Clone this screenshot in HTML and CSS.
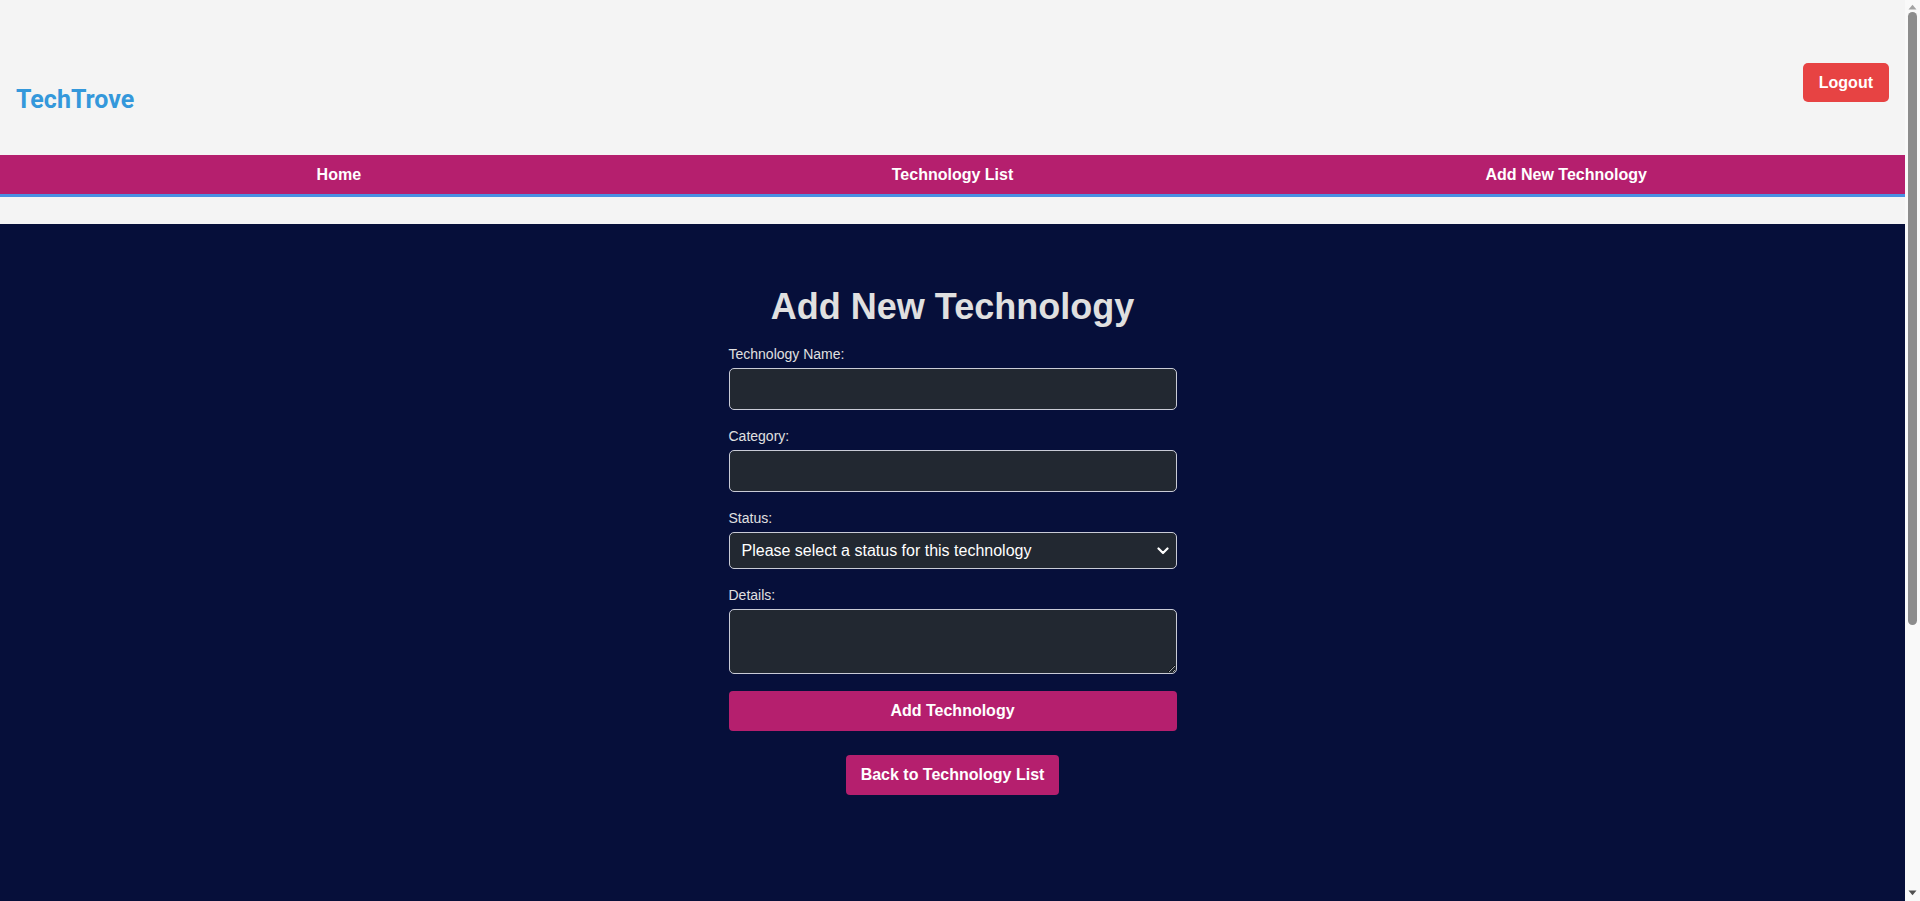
FILE: index.html
```html
<!DOCTYPE html>
<html lang="en">
<head>
<meta charset="utf-8">
<title>TechTrove - Add New Technology</title>
<link rel="stylesheet" href="styles.css">
</head>
<body>
<header class="site-header">
  <div class="logo">TechTrove</div>
  <button class="logout-btn" type="button">Logout</button>
</header>
<nav class="main-nav">
  <a class="nav-link" href="#">Home</a>
  <a class="nav-link" href="#">Technology List</a>
  <a class="nav-link" href="#">Add New Technology</a>
</nav>
<div class="spacer"></div>
<main class="main">
  <h1 class="page-title">Add New Technology</h1>
  <form class="tech-form">
    <div class="form-group">
      <label class="form-label" for="name">Technology Name:</label>
      <input class="form-input" id="name" type="text">
    </div>
    <div class="form-group">
      <label class="form-label" for="category">Category:</label>
      <input class="form-input" id="category" type="text">
    </div>
    <div class="form-group">
      <label class="form-label" for="status">Status:</label>
      <div class="select-wrap">
        <select class="form-select" id="status">
          <option>Please select a status for this technology</option>
        </select>
        <svg class="select-arrow" width="12" height="8" viewBox="0 0 12 8" aria-hidden="true"><path d="M1.5 1.5 L6 6 L10.5 1.5" fill="none" stroke="#ffffff" stroke-width="2.2" stroke-linecap="round" stroke-linejoin="round"/></svg>
      </div>
    </div>
    <div class="form-group">
      <label class="form-label" for="details">Details:</label>
      <textarea class="form-textarea" id="details"></textarea>
    </div>
    <button class="submit-btn" type="button">Add Technology</button>
  </form>
  <div class="back-row">
    <a class="back-btn" href="#">Back to Technology List</a>
  </div>
</main>
<div class="fake-scrollbar" aria-hidden="true">
  <svg class="sb-arrow sb-up" width="9" height="6" viewBox="0 0 9 6"><path d="M0.5 5.5 L4.5 0.8 L8.5 5.5 Z" fill="#a3a3a3"/></svg>
  <div class="sb-thumb"></div>
  <svg class="sb-arrow sb-down" width="9" height="6" viewBox="0 0 9 6"><path d="M0.5 0.5 L4.5 5.2 L8.5 0.5 Z" fill="#505050"/></svg>
</div>
</body>
</html>
```
FILE: styles.css
```css
* { box-sizing: border-box; }
html, body { margin: 0; padding: 0; }
body {
  background: #f4f4f4;
  font-family: "Liberation Sans", Arial, sans-serif;
  margin-right: 15px;
}
.site-header {
  height: 155px;
  display: flex;
  justify-content: space-between;
  align-items: flex-start;
  padding: 0 16px;
}
.logo {
  margin-top: 85px;
  font-family: Roboto, "Liberation Sans", sans-serif;
  font-weight: 700;
  font-size: 25px;
  line-height: 29px;
  color: #3498db;
}
.logout-btn {
  margin-top: 63px;
  background: #e74343;
  color: #fff;
  border: none;
  border-radius: 5px;
  font-family: "Liberation Sans", Arial, sans-serif;
  font-weight: 700;
  font-size: 16px;
  line-height: 19px;
  padding: 10px 16px;
}
.main-nav {
  display: flex;
  background: #b51f6e;
  border-bottom: 3px solid #4a90e2;
  padding: 0 32px;
}
.nav-link {
  flex: 1;
  text-align: center;
  color: #fff;
  text-decoration: none;
  font-weight: 700;
  font-size: 16px;
  line-height: 19px;
  padding: 10px 0;
}
.spacer { height: 27px; }
.main {
  background: #060f3a;
  min-height: 1061px;
  padding-top: 63px;
  display: flex;
  flex-direction: column;
  align-items: center;
}
.page-title {
  margin: 0 0 19px;
  font-size: 36px;
  line-height: 40px;
  font-weight: 700;
  color: #e0e0e0;
}
.tech-form { width: 448px; }
.form-group { margin-bottom: 18px; }
.form-label {
  display: block;
  font-size: 14px;
  line-height: 16px;
  color: #e0e0e0;
  margin-bottom: 6px;
}
.form-input, .form-select, .form-textarea {
  display: block;
  width: 100%;
  background: #222831;
  border: 1px solid #c9cbd6;
  border-radius: 5px;
  color: #fff;
  font-family: "Liberation Sans", Arial, sans-serif;
  font-size: 16px;
  margin: 0;
}
.form-input {
  height: 42px;
  padding: 11px 12px;
}
.select-wrap { position: relative; }
.form-select {
  appearance: none;
  -webkit-appearance: none;
  height: 37px;
  padding: 8px 30px 8px 12px;
  line-height: 19px;
}
.select-arrow {
  position: absolute;
  right: 8px;
  top: 15px;
}
.form-textarea {
  height: 65px;
  padding: 8px 12px;
  resize: vertical;
}
.submit-btn {
  display: block;
  width: 100%;
  margin-top: -1px;
  background: #b51f6e;
  color: #fff;
  border: none;
  border-radius: 4px;
  font-family: "Liberation Sans", Arial, sans-serif;
  font-weight: 700;
  font-size: 16px;
  line-height: 20px;
  padding: 10px 0;
}
.back-row { margin-top: 24px; }
.back-btn {
  display: inline-block;
  background: #b51f6e;
  color: #fff;
  text-decoration: none;
  border-radius: 4px;
  font-weight: 700;
  font-size: 16px;
  line-height: 20px;
  padding: 10px 15px;
}
.fake-scrollbar {
  position: fixed;
  top: 0;
  right: 0;
  width: 15px;
  height: 100vh;
  background: #f9f9f9;
}
.sb-arrow {
  position: absolute;
  left: 3px;
}
.sb-up { top: 4px; }
.sb-down { bottom: 5px; }
.sb-thumb {
  position: absolute;
  top: 12px;
  left: 3px;
  width: 9px;
  height: 613px;
  border-radius: 5px;
  background: #8c8c8c;
}
```
